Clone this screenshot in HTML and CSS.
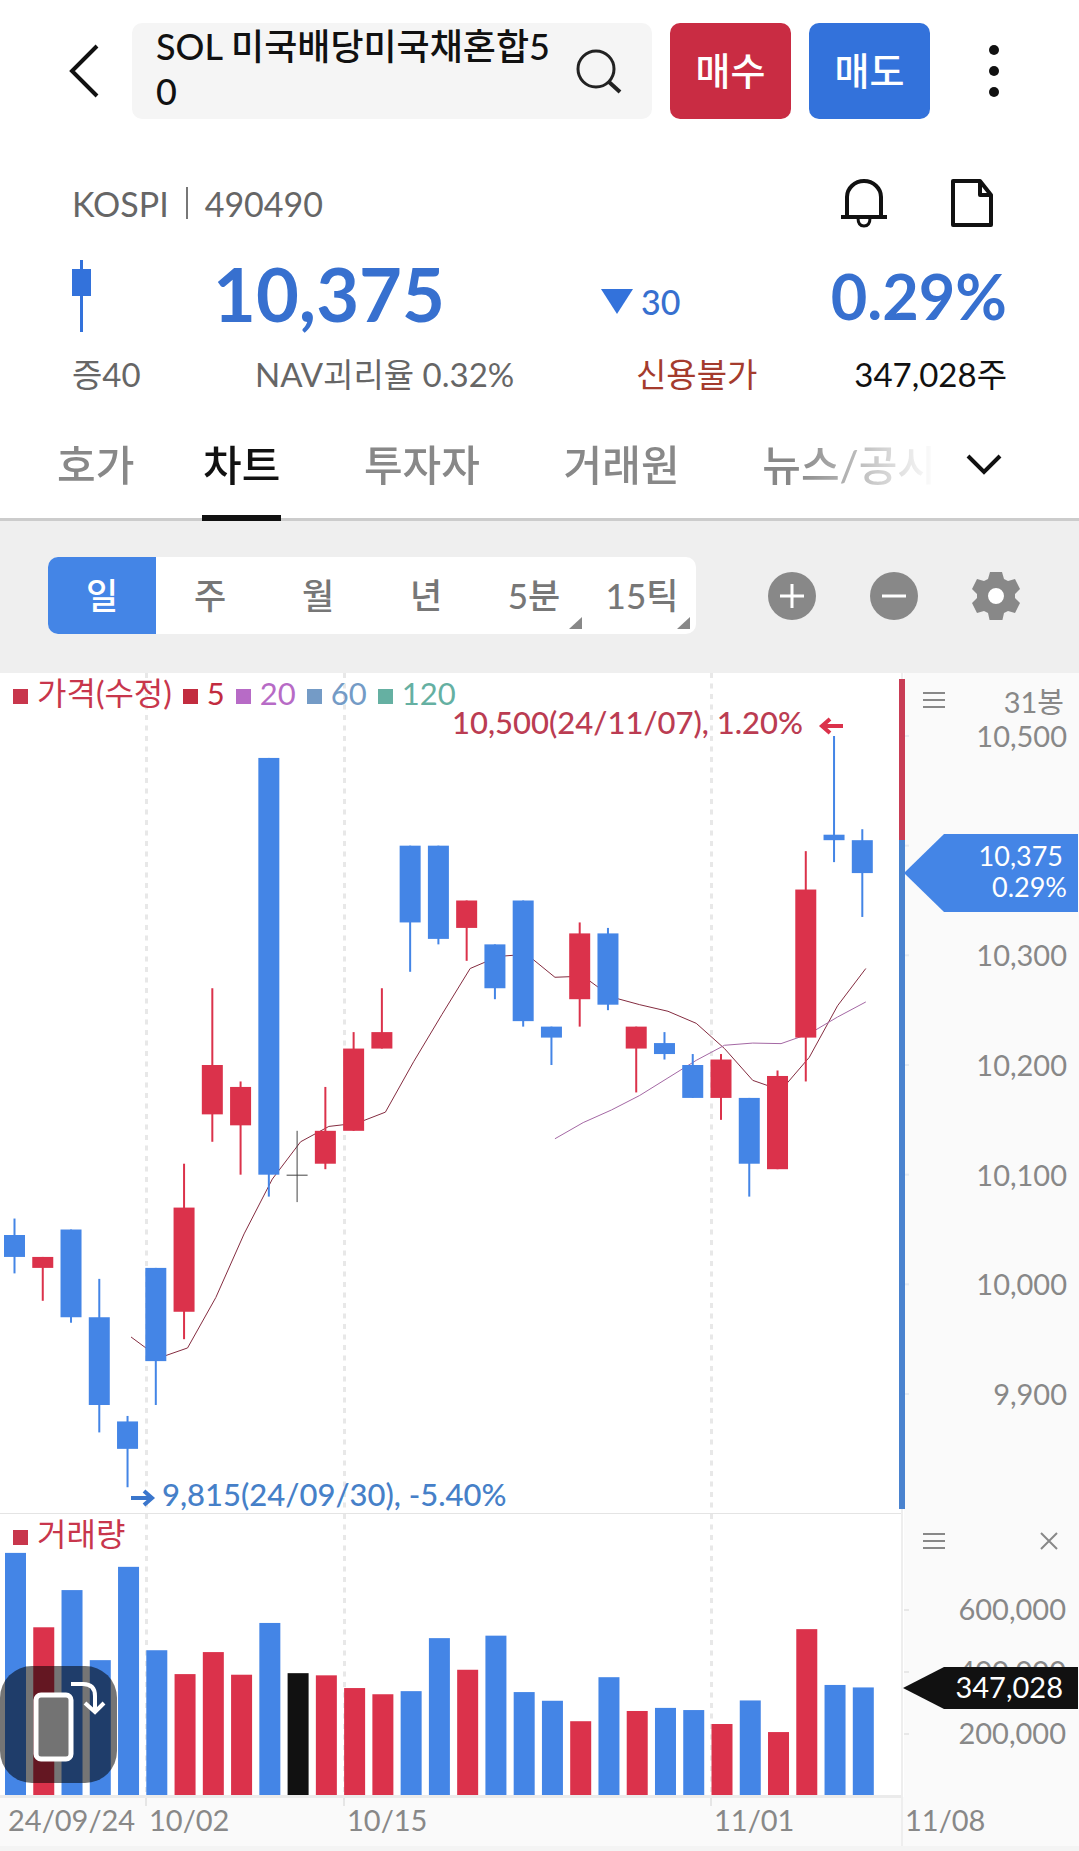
FILE: index.html
```html
<!DOCTYPE html>
<html lang="ko">

<head>
    <meta charset="UTF-8">
    <meta name="viewport" content="width=device-width, initial-scale=1.0">
    <title>SOL 미국배당미국채혼합50</title>
    <link rel="stylesheet" href="styles.css">
</head>

<body>

    <header class="topbar">
        <button class="icon-btn back" aria-label="뒤로">
            <svg width="32" height="56" viewBox="0 0 32 56"><path d="M29 3 4 28l25 25" fill="none" stroke="#111" stroke-width="4"/></svg>
        </button>
        <button class="search">
            <span class="search-name">SOL 미국배당미국채혼합50</span>
            <svg width="48" height="48" viewBox="0 0 48 48" fill="none" stroke="#222" stroke-width="3"><circle cx="22" cy="22" r="18"/><path d="m35 35 11 10" stroke-width="4"/></svg>
        </button>
        <button class="trade buy">매수</button>
        <button class="trade sell">매도</button>
        <button class="icon-btn more" aria-label="더보기">
            <svg width="12" height="56" viewBox="0 0 12 56" fill="#111"><circle cx="6" cy="7" r="5"/><circle cx="6" cy="28" r="5"/><circle cx="6" cy="49" r="5"/></svg>
        </button>
    </header>

    <main>
        <section class="quote">
            <div class="quote-code">
                <span>KOSPI</span>
                <span class="bar"></span>
                <span>490490</span>
                <button class="icon-btn bell" aria-label="알림">
                    <svg width="48" height="50" viewBox="0 0 48 50" fill="none" stroke="#111" stroke-width="4"><path d="M7 39V19a17 16 0 0 1 34 0v20M1 39h46"/><path d="M18 40q0 8 6 8t6-8" stroke-width="3"/></svg>
                </button>
                <button class="icon-btn" aria-label="메모">
                    <svg width="44" height="50" viewBox="0 0 44 50" fill="none" stroke="#111" stroke-width="4" stroke-linejoin="round"><path d="M3 3h27l11 14v30H3zM30 3v14h11"/></svg>
                </button>
            </div>
            <div class="quote-price">
                <svg width="20" height="72" viewBox="0 0 20 72" fill="#3372db"><path d="M8 0h3v72H8zM0 9h19v27H0z"/></svg>
                <strong class="price">10,375</strong>
                <span class="change"><svg width="32" height="25" viewBox="0 0 32 25" fill="#3372db"><path d="M0 0h32L16 25z"/></svg>30</span>
                <strong class="rate">0.29%</strong>
            </div>
            <div class="quote-info">
                <span>증40</span>
                <span>NAV괴리율 0.32%</span>
                <span class="credit">신용불가</span>
                <span class="shares">347,028주</span>
            </div>
        </section>

        <nav class="tabs">
            <div class="tab-list">
                <a href="#">호가</a>
                <a href="#" class="active">차트</a>
                <a href="#">투자자</a>
                <a href="#">거래원</a>
                <a href="#">뉴스/공시</a>
            </div>
            <button class="icon-btn" aria-label="메뉴 펼치기">
                <svg width="36" height="24" viewBox="0 0 36 24"><path d="m2 3 16 16L34 3" fill="none" stroke="#111" stroke-width="4"/></svg>
            </button>
        </nav>

        <div class="toolbar">
            <div class="periods">
                <button class="on">일</button>
                <button>주</button>
                <button>월</button>
                <button>년</button>
                <button class="sub">5분</button>
                <button class="sub">15틱</button>
            </div>
            <button class="icon-btn" aria-label="확대">
                <svg width="48" height="48" viewBox="0 0 48 48"><circle cx="24" cy="24" r="24" fill="#888"/><path d="M12 24h24M24 12v24" stroke="#fff" stroke-width="3"/></svg>
            </button>
            <button class="icon-btn" aria-label="축소">
                <svg width="48" height="48" viewBox="0 0 48 48"><circle cx="24" cy="24" r="24" fill="#888"/><path d="M12 24h24" stroke="#fff" stroke-width="3"/></svg>
            </button>
            <button class="icon-btn" aria-label="설정">
                <svg width="48" height="48" viewBox="0 0 48 48"><circle cx="24" cy="24" r="8" fill="#fff"/><path fill="#888" fill-rule="evenodd" d="M18 0h12l2 7 4 2 7-2 5 10-5 5v4l5 5-5 10-7-2-4 2-2 9H18l-2-9-4-2-7 2-5-10 5-5v-4l-5-5L5 7l7 2 4-2zM24 16a8 8 0 1 0 0 16 8 8 0 0 0 0-16z"/></svg>
            </button>
        </div>

        <section class="pane">
            <svg id="precio" class="plot" viewBox="0 0 1079 841"></svg>
            <div class="legend">
                <span class="c-price">가격(수정)</span>
                <span class="c-5">5</span>
                <span class="c-20">20</span>
                <span class="c-60">60</span>
                <span class="c-120">120</span>
            </div>
            <div class="axis-head">
                <button class="icon-btn" aria-label="가격 차트 메뉴">
                    <svg width="22" height="20" viewBox="0 0 22 20"><path d="M0 3h22M0 10h22M0 17h22" stroke="#888" stroke-width="2"/></svg>
                </button>
                <span>31봉</span>
            </div>
        </section>

        <section class="pane">
            <svg id="volumen" class="plot" viewBox="0 0 1079 337"></svg>
            <div class="legend">
                <span class="c-price">거래량</span>
            </div>
            <div class="axis-head">
                <button class="icon-btn" aria-label="거래량 차트 메뉴">
                    <svg width="22" height="20" viewBox="0 0 22 20"><path d="M0 3h22M0 10h22M0 17h22" stroke="#888" stroke-width="2"/></svg>
                </button>
                <button class="icon-btn close" aria-label="닫기">
                    <svg width="18" height="18" viewBox="0 0 18 18"><path d="m1 1 16 16M17 1 1 17" stroke="#888" stroke-width="2"/></svg>
                </button>
            </div>
            <button class="rotate" aria-label="가로 보기">
                <svg width="117" height="117" viewBox="0 0 117 117" fill="none" stroke="#fff"><rect x="36" y="29" width="35" height="64" rx="5" fill="#737373" stroke-width="5"/><path d="M71 18h12q12 0 12 12v16M85 37l10 9 9-9" stroke-width="4"/></svg>
            </button>
        </section>
    </main>

    <script src="chart.js"></script>
</body>

</html>
```
FILE: styles.css
```css
* {
    box-sizing: border-box;
}

body {
    margin: 0;
    background: #f4f4f4;
    color: #111;
    font-family: Lato, "Noto Sans CJK KR", sans-serif;
}

button {
    padding: 0;
    border: none;
    background: none;
    font-family: inherit;
    color: inherit;
    cursor: pointer;
}

svg {
    display: block;
}

.icon-btn {
    flex: none;
}

/* Cabecera */
.topbar {
    display: flex;
    align-items: center;
    padding: 23px 79px 0 68px;
    background: #fff;
}

.search {
    flex: 1;
    display: flex;
    align-items: center;
    justify-content: space-between;
    height: 96px;
    margin-left: 32px;
    padding: 0 30px 0 24px;
    border-radius: 10px;
    background: #f5f5f5;
    font-size: 36px;
    font-weight: 500;
    line-height: 45px;
    text-align: left;
}

.search-name {
    flex: 1;
    margin-right: 14px;
    padding-bottom: 4px;
    word-break: break-all;
}

.trade {
    width: 121px;
    height: 96px;
    margin-left: 18px;
    padding-bottom: 6px;
    border-radius: 10px;
    color: #fff;
    font-size: 38px;
    font-weight: 500;
}

.buy {
    background: #c92c43;
}

.sell {
    background: #3372db;
}

.more {
    margin-left: 58px;
}

/* Cotización */
.quote {
    padding: 59px 72px 18px;
    background: #fff;
}

.quote-code {
    display: flex;
    align-items: center;
    color: #666;
    font-size: 34px;
}

.bar {
    width: 2px;
    height: 32px;
    margin: 0 17px;
    background: #777;
}

.bell {
    margin: 0 62px 0 auto;
}

.quote-code .icon-btn:last-child {
    margin-right: 13px;
}

.quote-price {
    display: grid;
    grid-template-columns: 141fr 388fr 228fr 178fr;
    align-items: center;
    height: 72px;
    margin-top: 32px;
    color: #3770cf;
}

.price {
    margin-top: -4px;
    font-size: 74px;
    line-height: 72px;
}

.change {
    display: flex;
    align-items: center;
    gap: 8px;
    margin-top: 10px;
    font-size: 34px;
    font-weight: 500;
}

.rate {
    font-size: 63px;
    line-height: 72px;
    text-align: right;
}

.quote-info {
    display: grid;
    grid-template-columns: 183fr 381fr 215fr 156fr;
    margin-top: 22px;
    color: #666;
    font-size: 33px;
    line-height: 40px;
    white-space: nowrap;
}

.credit {
    color: #a43b2d;
}

.shares {
    color: #111;
    text-align: right;
}

/* Pestañas */
.tabs {
    display: flex;
    align-items: center;
    height: 109px;
    padding: 0 77px 0 57px;
    border-bottom: 3px solid #ccc;
    background: #fff;
}

.tab-list {
    flex: 1;
    display: grid;
    grid-template-columns: 146fr 163fr 201fr 200fr 169fr;
    margin-right: 30px;
    overflow: hidden;
    height: 109px;
    margin-bottom: -3px;
    -webkit-mask-image: linear-gradient(to right, #000 84%, transparent 100%);
    mask-image: linear-gradient(to right, #000 84%, transparent 100%);
}

.tabs a {
    justify-self: start;
    color: #888;
    font-size: 42px;
    font-weight: 500;
    line-height: 106px;
    text-decoration: none;
    white-space: nowrap;
}

.tabs .active {
    height: 109px;
    padding: 0 1px;
    border-bottom: 6px solid #111;
    color: #111;
}

/* Barra de periodos */
.toolbar {
    display: flex;
    align-items: center;
    gap: 54px;
    padding: 36px 59px 39px 48px;
    background: #efefef;
}

.periods {
    flex: 0 1 648px;
    display: flex;
    margin-right: auto;
    overflow: hidden;
    border-radius: 10px;
    background: #fff;
}

.periods button {
    position: relative;
    flex: 1;
    height: 77px;
    padding-bottom: 5px;
    color: #777;
    font-size: 35px;
    font-weight: 500;
}

.periods .on {
    background: #4485e6;
    color: #fff;
}

.periods .sub::after {
    content: "";
    position: absolute;
    right: 6px;
    bottom: 5px;
    border-left: 13px solid transparent;
    border-bottom: 12px solid #888;
}

/* Gráfico */
.pane {
    position: relative;
    background: #fff;
}

.plot {
    width: 100%;
    height: auto;
}

.plot text {
    fill: #888;
    font-size: 29px;
}

.plot .end {
    text-anchor: end;
}

.plot .high,
.plot .low {
    font-size: 31px;
    font-weight: 500;
}

.plot .high {
    fill: #bb3c52;
}

.plot .low {
    fill: #4680c8;
}

.plot .tag {
    fill: #fff;
    font-size: 27px;
    text-anchor: end;
}

.plot .tag-volume {
    font-size: 29px;
}

.legend {
    position: absolute;
    top: 0;
    left: 13px;
    display: flex;
    gap: 11px;
    font-size: 31px;
    line-height: 40px;
}

.legend span {
    display: flex;
    align-items: center;
    gap: 9px;
}

.legend span::before {
    content: "";
    width: 15px;
    height: 15px;
    margin-top: 6px;
    background: currentColor;
}

.legend .c-price {
    font-size: 32px;
}

.c-price {
    color: #c8364c;
}

.c-5 {
    color: #c22c3f;
}

.c-20 {
    color: #b76bc6;
}

.c-60 {
    color: #749bc6;
}

.c-120 {
    color: #65b0a2;
}

.axis-head {
    position: absolute;
    top: 8px;
    right: 15px;
    display: flex;
    align-items: center;
    justify-content: space-between;
    width: 141px;
    height: 38px;
    color: #888;
    font-size: 29px;
}

.close {
    margin-right: 6px;
}

.rotate {
    position: absolute;
    left: 0;
    bottom: 68px;
    border-radius: 32px;
    background: rgba(0, 0, 0, .54);
}
```
FILE: chart.js
```js
// Datos: [apertura, máximo, mínimo, cierre, volumen en miles]
const velas = [
    [10045, 10060, 10010, 10025, 781],
    [10015, 10025, 9985, 10025, 541],
    [10050, 10050, 9965, 9970, 661],
    [9970, 10005, 9865, 9890, 435],
    [9875, 9880, 9815, 9850, 736],
    [10015, 10015, 9890, 9930, 467],
    [9975, 10110, 9950, 10070, 390],
    [10155, 10270, 10130, 10200, 461],
    [10145, 10185, 10100, 10180, 388],
    [10480, 10480, 10080, 10100, 555],
    [10100, 10140, 10075, 10100, 393],
    [10110, 10180, 10105, 10140, 386],
    [10140, 10230, 10140, 10215, 345],
    [10215, 10270, 10215, 10230, 325],
    [10400, 10400, 10285, 10330, 335],
    [10400, 10400, 10310, 10315, 506],
    [10325, 10350, 10295, 10350, 404],
    [10310, 10310, 10260, 10270, 514],
    [10350, 10350, 10235, 10240, 332],
    [10235, 10235, 10200, 10225, 304],
    [10260, 10330, 10235, 10320, 238],
    [10320, 10325, 10250, 10255, 380],
    [10215, 10235, 10175, 10235, 271],
    [10220, 10230, 10205, 10210, 281],
    [10200, 10210, 10170, 10170, 274],
    [10170, 10210, 10150, 10205, 229],
    [10170, 10170, 10080, 10110, 305],
    [10105, 10195, 10105, 10190, 203],
    [10225, 10395, 10185, 10360, 535],
    [10410, 10500, 10385, 10405, 355],
    [10405, 10415, 10335, 10375, 347]
];
const ROJO = '#db324b';
const AZUL = '#4485e6';

// Funciones
const x = i => 14.5 + i * 28.26;
const y = precio => 63 + (10500 - precio) * 1.0967;
const rect = (x, y, w, h, color) => `<rect x="${x}" y="${y}" width="${w}" height="${h}" fill="${color}"/>`;
const texto = (x, y, clase, contenido) => `<text x="${x}" y="${y}" class="${clase}">${contenido}</text>`;
const color = ([apertura, , , cierre]) => cierre > apertura ? ROJO : cierre < apertura ? AZUL : '#111';

const media = (dias, trazo) => {
    const puntos = [];
    for (let i = dias - 1; i < velas.length; i++) {
        const suma = velas.slice(i - dias + 1, i + 1).reduce((total, vela) => total + vela[3], 0);
        puntos.push(`${x(i) + 3.5},${y(suma / dias)}`);
    }
    return `<polyline points="${puntos.join(' ')}" fill="none" stroke="${trazo}"/>`;
};

const rejilla = alto => [146, 344, 711].map(px =>
    `<path d="M${px + 0.5} 0V${alto}" stroke="#e8e8e8" stroke-width="3" stroke-dasharray="5 5.5"/>`).join('');

// Panel de precio
let precio = rect(904, 0, 175, 841, '#fafafa') + rejilla(840) + media(5, '#842c40') + media(20, '#a468a4');

velas.forEach((vela, i) => {
    const [apertura, maximo, minimo, cierre] = vela;
    const arriba = y(Math.max(apertura, cierre));
    const alto = Math.abs(apertura - cierre) * 1.0967;
    const c = alto ? color(vela) : '#444';
    precio += rect(x(i) - (alto ? 1 : 0.5), y(maximo), alto ? 2 : 1, y(minimo) - y(maximo), c);
    precio += rect(x(i) - 10.5, arriba, 21, alto || 1, c);
});

precio += rect(0, 840, 902, 2, '#e4e4e4') + rect(901, 0, 2, 841, '#eee');
precio += rect(899, 6, 6, 161, '#c93d55') + rect(899, 167, 6, 669, '#4a83cf');

[10500, 10400, 10300, 10200, 10100, 10000, 9900].forEach(p => {
    precio += rect(905, y(p) - 1, 4, 2, '#e8ecf2');
    if (p !== 10400) {
        precio += texto(1067, Math.round(y(p)) + 11, 'end', p.toLocaleString('en-US'));
    }
});

precio += `<path d="M904 200 944 161h134v78H944z" fill="${AZUL}"/>`;
precio += texto(1063, 193, 'tag', '10,375') + texto(1067, 224, 'tag', '0.29%');
precio += texto(803, 61, 'high end', '10,500(24/11/07), 1.20%');
precio += texto(162, 833, 'low', '9,815(24/09/30), -5.40%');
precio += `<path d="M843 53h-21m8-7-8 7 8 7" fill="none" stroke="${ROJO}" stroke-width="4"/>`;
precio += '<path d="M131 825h21m-8-7 8 7-8 7" fill="none" stroke="#3a76cc" stroke-width="4"/>';
document.querySelector('#precio').innerHTML = precio;

// Panel de volumen
let volumen = rect(904, 0, 175, 332, '#fafafa') + rect(0, 283, 904, 49, '#fafafa') + rejilla(281);

velas.forEach((vela, i) => {
    const alto = vela[4] * 0.31;
    volumen += rect(x(i) - 9.5, 281 - alto, 21, alto, color(vela));
});

volumen += rect(0, 281, 902, 3, '#ebebeb') + rect(901, 0, 2, 332, '#eee') + rect(0, 332, 1079, 5, '#f4f4f4');
[600, 400, 200].forEach(v => {
    volumen += rect(904, 281 - v * 0.31, 5, 2, '#e8e8e8');
    volumen += texto(1066, Math.round(292 - v * 0.31), 'end', v + ',000');
});

[[8, '24/09/24'], [149, '10/02'], [347, '10/15'], [714, '11/01'], [905, '11/08']].forEach(([px, fecha]) => {
    if (px > 8 && px < 900) {
        volumen += rect(px - 4, 284, 2, 8, '#e6e6e6');
    }
    volumen += texto(px, 317, '', fecha);
});

volumen += '<path d="M903 174 944 153h134v42H944z" fill="#111"/>';
volumen += texto(1063, 184, 'tag tag-volume', '347,028');
document.querySelector('#volumen').innerHTML = volumen;
```
